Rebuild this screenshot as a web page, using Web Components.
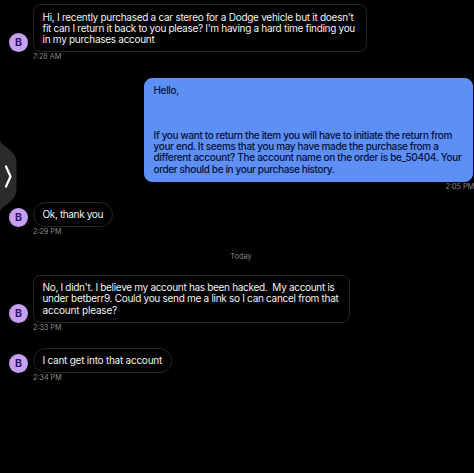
<!DOCTYPE html>
<html lang="en">
<head>
<meta charset="utf-8">
<title>Messages</title>
<style>
  body {
    margin: 0;
    background: #000;
    font-family: Inter, "Liberation Sans", sans-serif;
  }
</style>
</head>
<body>
<chat-thread>
  <chat-message time="7:28 AM" initial="B" style="--width: 334px">
    <text-line width="311">Hi, I recently purchased a car stereo for a Dodge vehicle but it doesn't</text-line>
    <text-line width="312.5">fit can I return it back to you please? I'm having a hard time finding you</text-line>
    <text-line width="112">in my purchases account</text-line>
  </chat-message>
  <chat-message time="2:05 PM" outgoing style="--width: 329px; --gap: 16.5px">
    <text-line width="25.5">Hello,</text-line>
    <text-line></text-line>
    <text-line></text-line>
    <text-line></text-line>
    <text-line width="298.5">If you want to return the item you will have to initiate the return from</text-line>
    <text-line width="285">your end. It seems that you may have made the purchase from a</text-line>
    <text-line width="308">different account? The account name on the order is be_50404. Your</text-line>
    <text-line width="181">order should be in your purchase history.</text-line>
  </chat-message>
  <chat-message time="2:29 PM" initial="B" style="--width: 80px; --radius: 12.5px; --gap: 11.5px">
    <text-line width="60.5">Ok, thank you</text-line>
  </chat-message>
  <day-divider>Today</day-divider>
  <chat-message time="2:33 PM" initial="B" style="--width: 317px">
    <text-line width="292">No, I didn't. I believe my account has been hacked.&nbsp; My account is</text-line>
    <text-line width="296">under betberr9. Could you send me a link so I can cancel from that</text-line>
    <text-line width="74.5">account please?</text-line>
  </chat-message>
  <chat-message time="2:34 PM" initial="B" style="--width: 139px; --radius: 12.5px; --gap: 16px">
    <text-line width="119.5">I cant get into that account</text-line>
  </chat-message>
</chat-thread>
<edge-handle></edge-handle>

<script>
class ChatThread extends HTMLElement {
  constructor() {
    super();
    this.attachShadow({ mode: "open" });
    this.shadowRoot.innerHTML = /* html */`
    <style>
      :host {
        display: flex;
        flex-direction: column;
        box-sizing: border-box;
        width: 474px;
        height: 473px;
        padding-top: 4.4px;
        overflow: hidden;
      }
    </style>
    <slot></slot>`;
  }
}

/* One line of a message, tracked to the given width */
class TextLine extends HTMLElement {
  constructor() {
    super();
    this.attachShadow({ mode: "open" });
    this.shadowRoot.innerHTML = /* html */`
    <style>
      :host {
        display: block;
        height: 11.25px;
        white-space: nowrap;
      }
    </style>
    <span><slot></slot></span>`;
  }

  connectedCallback() {
    const width = Number(this.getAttribute("width"));
    if (!width) return;
    const span = this.shadowRoot.querySelector("span");
    const extra = width - span.getBoundingClientRect().width;
    span.style.letterSpacing = `${extra / this.textContent.length}px`;
  }
}

class ChatMessage extends HTMLElement {
  static get styles() {
    return /* css */`
      :host {
        display: grid;
        grid-template-columns: 19px var(--width);
        column-gap: 5px;
        padding-left: 9px;
        margin-top: var(--gap, 0);
        align-items: end;
      }

      :host([outgoing]) {
        grid-template-columns: var(--width);
        justify-content: end;
        padding: 0 1px 0 0;
      }

      .avatar {
        display: grid;
        place-items: center;
        width: 19px;
        height: 19px;
        border-radius: 50%;
        background: #c79ff3;
        color: #35115f;
        font-size: 10.5px;
        font-weight: 700;
      }

      .bubble {
        box-sizing: border-box;
        padding: 6.3px 8.5px 5.7px;
        border: 1px solid #262626;
        border-radius: var(--radius, 8px);
        color: #f2f2f2;
        font-size: 10px;
        line-height: 11.25px;
      }

      :host([outgoing]) .bubble {
        border-color: #5d8ff5;
        background: #5d8ff5;
        color: #06123a;
        font-weight: 500;
      }

      time {
        grid-column: 2;
        height: 9px;
        color: #8b8b8b;
        font-size: 7.2px;
        line-height: 9px;
        white-space: nowrap;
      }

      :host([outgoing]) time {
        grid-column: 1;
        justify-self: end;
        margin-right: -1px;
      }
    `;
  }

  connectedCallback() {
    this.attachShadow({ mode: "open" });
    const initial = this.getAttribute("initial");
    this.shadowRoot.innerHTML = /* html */`
    <style>${ChatMessage.styles}</style>
    ${initial ? `<div class="avatar">${initial}</div>` : ""}
    <div class="bubble"><slot></slot></div>
    <time>${this.getAttribute("time")}</time>`;
  }
}

class DayDivider extends HTMLElement {
  constructor() {
    super();
    this.attachShadow({ mode: "open" });
    this.shadowRoot.innerHTML = /* html */`
    <style>
      :host {
        display: block;
        padding: 15.5px 0 13px;
        padding-left: 8px;
        color: #858585;
        font-size: 7.4px;
        line-height: 10px;
        text-align: center;
      }
    </style>
    <slot></slot>`;
  }
}

/* Pull-out tab, floats over the left edge of the thread */
class EdgeHandle extends HTMLElement {
  constructor() {
    super();
    this.attachShadow({ mode: "open" });
    this.shadowRoot.innerHTML = /* html */`
    <style>
      :host {
        position: absolute;
        left: 0;
        top: 140px;
      }

      svg {
        display: block;
      }
    </style>
    <svg width="17" height="72" viewBox="0 0 17 72">
      <path d="M0 1C2 5 6 6 10 10C14 14 16.500 17 16.500 23V49C16.500 55 14 58 10 62C6 66 2 67 0 71Z" fill="#2b2b2b"/>
      <path d="M6 26.500L10.500 36.500L6 46.500" fill="none" stroke="#fff" stroke-width="2.200" stroke-linecap="round" stroke-linejoin="round"/>
    </svg>`;
  }
}

customElements.define("chat-thread", ChatThread);
customElements.define("chat-message", ChatMessage);
customElements.define("text-line", TextLine);
customElements.define("day-divider", DayDivider);
customElements.define("edge-handle", EdgeHandle);
</script>
</body>
</html>
